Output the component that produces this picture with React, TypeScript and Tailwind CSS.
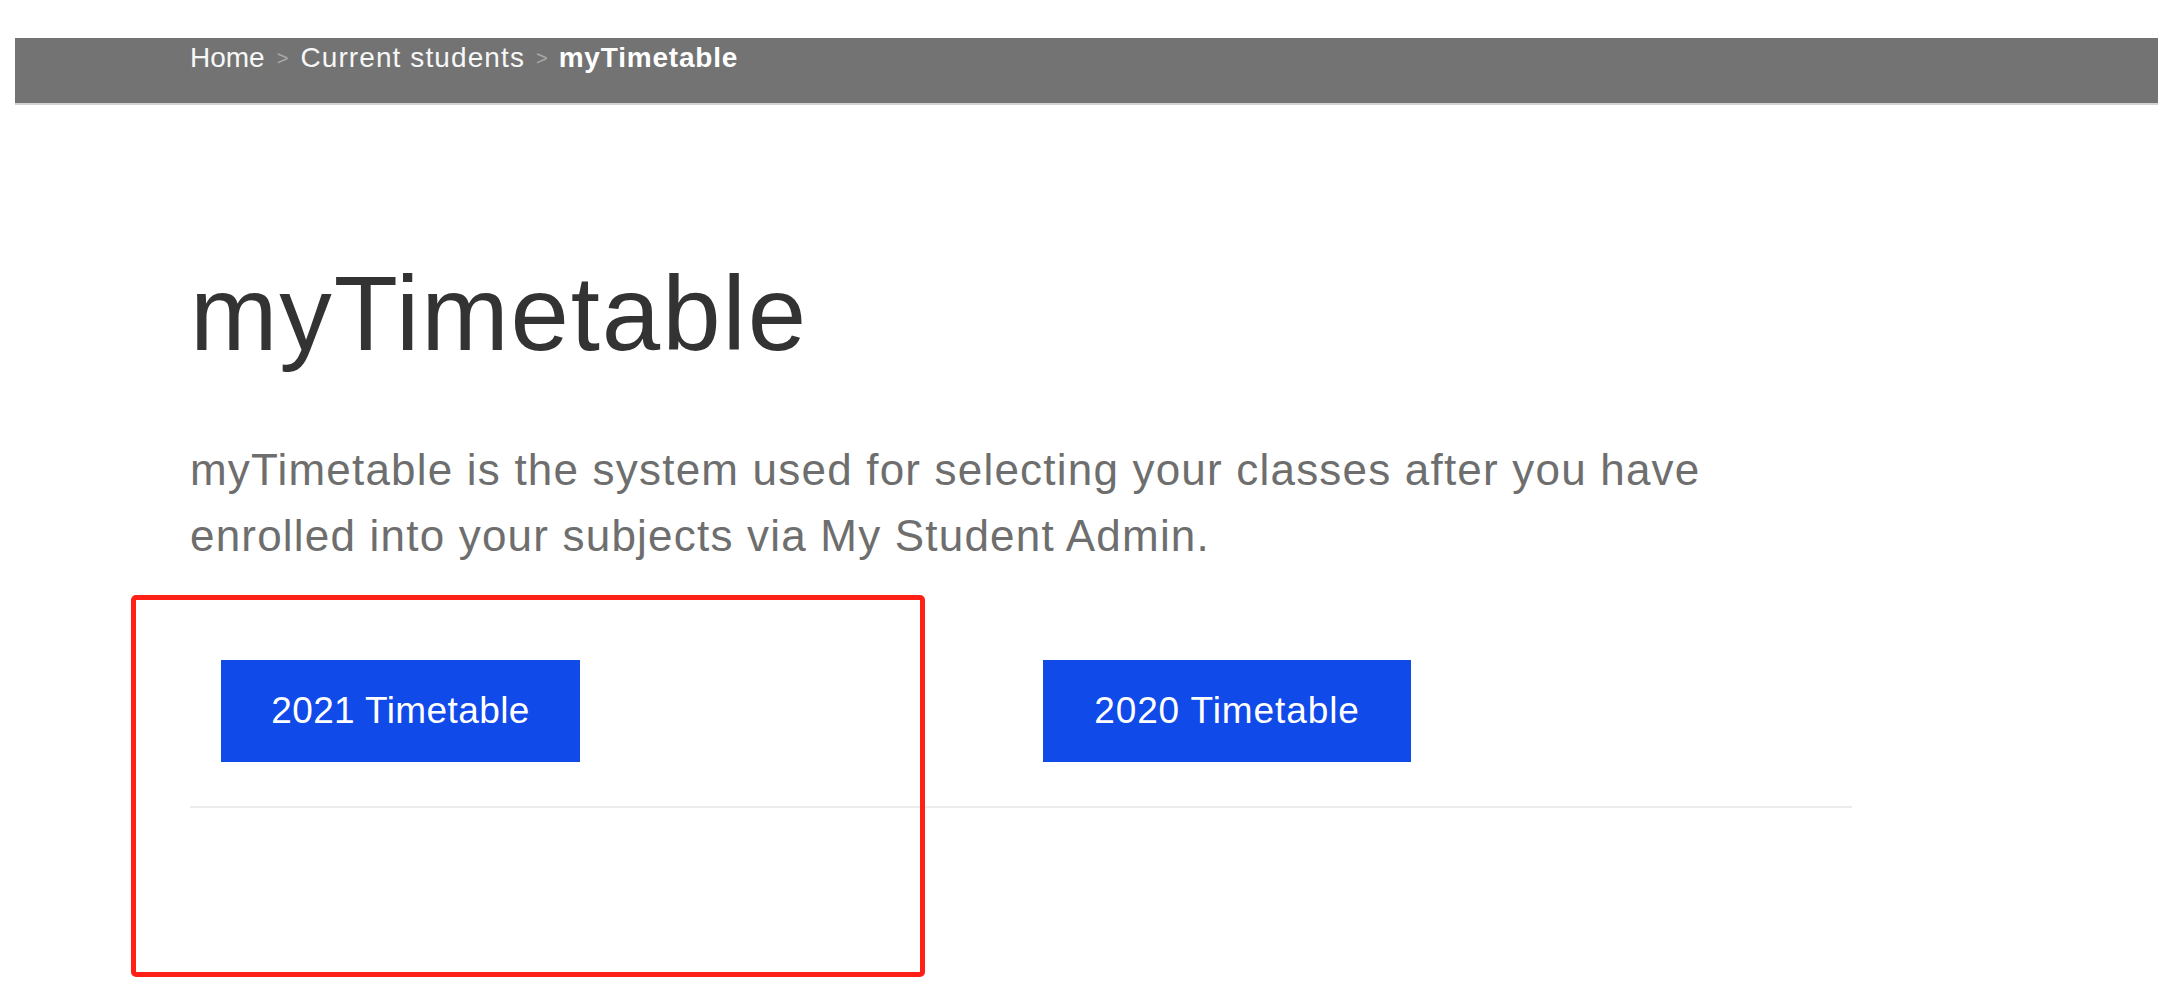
export default function App() {
  return (
    <div className="relative min-h-[982px] w-[2176px] bg-white pt-[38px] font-['Liberation_Sans',Arial,sans-serif]">
      {/* Breadcrumb bar */}
      <div className="ml-[15px] w-[2143px] h-[67px] bg-[#737373] border-b-[2px] border-[#d2d2d2] pt-[4px] pl-[175px]">
        <nav className="flex items-center text-[28px] leading-[32px] text-[#f7f7f7]">
          <span>Home</span>
          <span className="mx-[12px] text-[20px] text-[#a9a9a9]">&gt;</span>
          <span className="tracking-[1.1px]">Current students</span>
          <span className="mx-[11px] text-[20px] text-[#a9a9a9]">&gt;</span>
          <span className="font-bold tracking-[0.8px] text-white">myTimetable</span>
        </nav>
      </div>

      {/* Main content */}
      <main className="ml-[190px] w-[1662px]">
        <h1 className="mt-[156px] text-[105px] leading-[105px] tracking-[1.9px] text-[#333333]">myTimetable</h1>

        <p className="mt-[71px] w-[1560px] text-[44px] leading-[66px] tracking-[1.2px] text-[#6e6e6e]">
          myTimetable is the system used for selecting your classes after you have enrolled into your subjects via My
          Student Admin.
        </p>

        <div className="mt-[91px] flex items-start">
          <a className="ml-[31px] flex h-[102px] w-[359px] items-center justify-center bg-[#104ae9] text-[37px] tracking-[0.4px] text-white">
            2021 Timetable
          </a>
          <a className="ml-[463px] flex h-[102px] w-[368px] items-center justify-center bg-[#104ae9] text-[37px] tracking-[0.9px] text-white">
            2020 Timetable
          </a>
        </div>

        <div className="mt-[44px] h-[2px] w-[1662px] bg-[#ececec]" />
      </main>

      {/* Annotation highlight */}
      <div className="pointer-events-none absolute left-[131px] top-[595px] h-[382px] w-[794px] rounded-[5px] border-[5px] border-[#ff2116]" />
    </div>
  )
}
